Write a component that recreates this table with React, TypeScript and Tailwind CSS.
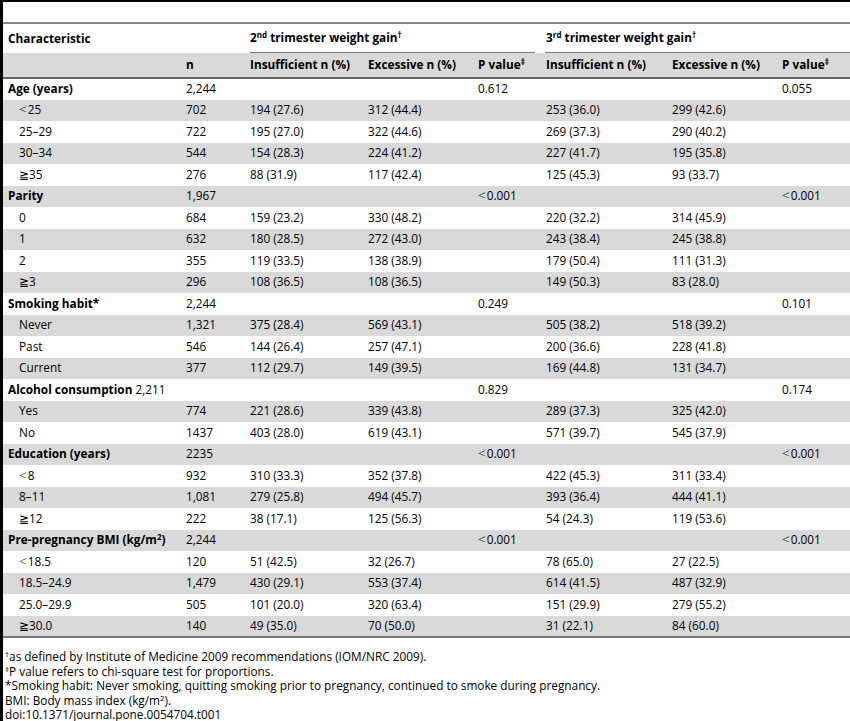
type Row = {
  label: React.ReactNode
  sub?: boolean
  n?: string
  i2?: string
  e2?: string
  p2?: string
  i3?: string
  e3?: string
  p3?: string
}

const lt = <span className="font-light text-[13.5px] leading-none mr-[1px]">{'<'}</span>
const lt001 = (
  <>
    {lt}0.001
  </>
)

const rows: Row[] = [
  { label: 'Age (years)', n: '2,244', p2: '0.612', p3: '0.055' },
  { label: <>{lt}25</>, sub: true, n: '702', i2: '194 (27.6)', e2: '312 (44.4)', i3: '253 (36.0)', e3: '299 (42.6)' },
  { label: '25–29', sub: true, n: '722', i2: '195 (27.0)', e2: '322 (44.6)', i3: '269 (37.3)', e3: '290 (40.2)' },
  { label: '30–34', sub: true, n: '544', i2: '154 (28.3)', e2: '224 (41.2)', i3: '227 (41.7)', e3: '195 (35.8)' },
  { label: '≧35', sub: true, n: '276', i2: '88 (31.9)', e2: '117 (42.4)', i3: '125 (45.3)', e3: '93 (33.7)' },
  { label: 'Parity', n: '1,967', p2: 'lt', p3: 'lt' },
  { label: '0', sub: true, n: '684', i2: '159 (23.2)', e2: '330 (48.2)', i3: '220 (32.2)', e3: '314 (45.9)' },
  { label: '1', sub: true, n: '632', i2: '180 (28.5)', e2: '272 (43.0)', i3: '243 (38.4)', e3: '245 (38.8)' },
  { label: '2', sub: true, n: '355', i2: '119 (33.5)', e2: '138 (38.9)', i3: '179 (50.4)', e3: '111 (31.3)' },
  { label: '≧3', sub: true, n: '296', i2: '108 (36.5)', e2: '108 (36.5)', i3: '149 (50.3)', e3: '83 (28.0)' },
  { label: 'Smoking habit*', n: '2,244', p2: '0.249', p3: '0.101' },
  { label: 'Never', sub: true, n: '1,321', i2: '375 (28.4)', e2: '569 (43.1)', i3: '505 (38.2)', e3: '518 (39.2)' },
  { label: 'Past', sub: true, n: '546', i2: '144 (26.4)', e2: '257 (47.1)', i3: '200 (36.6)', e3: '228 (41.8)' },
  { label: 'Current', sub: true, n: '377', i2: '112 (29.7)', e2: '149 (39.5)', i3: '169 (44.8)', e3: '131 (34.7)' },
  {
    label: (
      <>
        Alcohol consumption <span className="font-normal">2,211</span>
      </>
    ),
    p2: '0.829',
    p3: '0.174'
  },
  { label: 'Yes', sub: true, n: '774', i2: '221 (28.6)', e2: '339 (43.8)', i3: '289 (37.3)', e3: '325 (42.0)' },
  { label: 'No', sub: true, n: '1437', i2: '403 (28.0)', e2: '619 (43.1)', i3: '571 (39.7)', e3: '545 (37.9)' },
  { label: 'Education (years)', n: '2235', p2: 'lt', p3: 'lt' },
  { label: <>{lt}8</>, sub: true, n: '932', i2: '310 (33.3)', e2: '352 (37.8)', i3: '422 (45.3)', e3: '311 (33.4)' },
  { label: '8–11', sub: true, n: '1,081', i2: '279 (25.8)', e2: '494 (45.7)', i3: '393 (36.4)', e3: '444 (41.1)' },
  { label: '≧12', sub: true, n: '222', i2: '38 (17.1)', e2: '125 (56.3)', i3: '54 (24.3)', e3: '119 (53.6)' },
  {
    label: (
      <>
        Pre-pregnancy BMI (kg/m<sup className="text-[8px]">2</sup>)
      </>
    ),
    n: '2,244',
    p2: 'lt',
    p3: 'lt'
  },
  { label: <>{lt}18.5</>, sub: true, n: '120', i2: '51 (42.5)', e2: '32 (26.7)', i3: '78 (65.0)', e3: '27 (22.5)' },
  { label: '18.5–24.9', sub: true, n: '1,479', i2: '430 (29.1)', e2: '553 (37.4)', i3: '614 (41.5)', e3: '487 (32.9)' },
  { label: '25.0–29.9', sub: true, n: '505', i2: '101 (20.0)', e2: '320 (63.4)', i3: '151 (29.9)', e3: '279 (55.2)' },
  { label: '≧30.0', sub: true, n: '140', i2: '49 (35.0)', e2: '70 (50.0)', i3: '31 (22.1)', e3: '84 (60.0)' }
]

const cell = 'pl-[4px] align-middle whitespace-nowrap'

function pv(v?: string) {
  return v === 'lt' ? lt001 : v
}

export default function App() {
  return (
    <div
      className="w-[850px] h-[721px] bg-white border-l-[3px] border-t-[2px] border-black text-black text-[11.8px] overflow-hidden"
      style={{ fontFamily: '"Open Sans", "Noto Sans", sans-serif' }}
    >
      <div className="h-[20px]"></div>
      <table className="table-fixed border-collapse w-[847px]">
        <colgroup>
          <col className="w-[179px]" />
          <col className="w-[64px]" />
          <col className="w-[118px]" />
          <col className="w-[110px]" />
          <col className="w-[68px]" />
          <col className="w-[126px]" />
          <col className="w-[110px]" />
          <col className="w-[72px]" />
        </colgroup>
        <thead className="font-bold">
          <tr className="h-[29px] border-t-[2px] border-[#888]">
            <th className="pl-[5px] text-left align-middle">Characteristic</th>
            <th></th>
            <th colSpan={3} className="p-0 text-left align-bottom">
              <div className="ml-[4px] mr-[7px] h-[29px] flex items-center border-b border-[#777]">
                <span>
                  2<sup className="text-[8px]">nd</sup> trimester weight gain<sup className="text-[8px]">†</sup>
                </span>
              </div>
            </th>
            <th colSpan={3} className="p-0 text-left align-bottom">
              <div className="ml-[3px] h-[29px] flex items-center border-b border-[#777]">
                <span className="pl-[1px]">
                  3<sup className="text-[8px]">rd</sup> trimester weight gain<sup className="text-[8px]">†</sup>
                </span>
              </div>
            </th>
          </tr>
          <tr className="h-[25px] bg-[#d9d9d9] border-b-[2px] border-[#666] text-left">
            <th></th>
            <th className={cell}>n</th>
            <th className={cell}>Insufficient n (%)</th>
            <th className={cell}>Excessive n (%)</th>
            <th className={cell}>
              P value<sup className="text-[8px]">‡</sup>
            </th>
            <th className={cell}>Insufficient n (%)</th>
            <th className={cell}>Excessive n (%)</th>
            <th className={cell}>
              P value<sup className="text-[8px]">‡</sup>
            </th>
          </tr>
        </thead>
        <tbody>
          {rows.map((r, idx) => (
            <tr
              key={idx}
              className={`h-[21.5px] ${idx % 2 === 1 ? 'bg-[#d9d9d9]' : 'bg-white'} ${idx === rows.length - 1 ? 'border-b-[2px] border-[#777]' : ''}`}
            >
              <td className={`${cell} ${r.sub ? 'pl-[16px]' : 'pl-[5px] font-bold'}`}>{r.label}</td>
              <td className={cell}>{r.n}</td>
              <td className={cell}>{r.i2}</td>
              <td className={cell}>{r.e2}</td>
              <td className={cell}>{pv(r.p2)}</td>
              <td className={cell}>{r.i3}</td>
              <td className={cell}>{r.e3}</td>
              <td className={cell}>{pv(r.p3)}</td>
            </tr>
          ))}
        </tbody>
      </table>
      <div className="pt-[11px] pl-[2px] leading-[14.5px] text-[11.8px]">
        <p>
          <sup className="text-[8px]">†</sup>as defined by Institute of Medicine 2009 recommendations (IOM/NRC 2009).
        </p>
        <p>
          <sup className="text-[8px]">‡</sup>P value refers to chi-square test for proportions.
        </p>
        <p>*Smoking habit: Never smoking, quitting smoking prior to pregnancy, continued to smoke during pregnancy.</p>
        <p>
          BMI: Body mass index (kg/m<sup className="text-[8px]">2</sup>).
        </p>
        <p>doi:10.1371/journal.pone.0054704.t001</p>
      </div>
    </div>
  )
}
